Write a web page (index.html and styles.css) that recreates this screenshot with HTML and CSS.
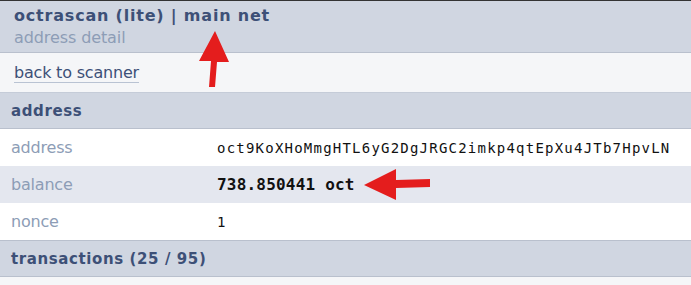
FILE: index.html
```html
<!DOCTYPE html>
<html>
<head>
<meta charset="utf-8">
<link rel="stylesheet" href="styles.css">
</head>
<body>
<div class="page">
  <header class="top">
    <div class="title">octrascan (lite) | main net</div>
    <div class="subtitle">address detail</div>
  </header>
  <nav class="nav"><a class="back" href="#">back to scanner</a></nav>
  <section>
    <h2 class="sec">address</h2>
    <div class="row">
      <div class="lbl">address</div>
      <div class="val mono">oct9KoXHoMmgHTL6yG2DgJRGC2imkp4qtEpXu4JTb7HpvLN</div>
    </div>
    <div class="row alt">
      <div class="lbl">balance</div>
      <div class="val mono bold">738.850441 oct</div>
    </div>
    <div class="row">
      <div class="lbl">nonce</div>
      <div class="val mono">1</div>
    </div>
  </section>
  <section>
    <h2 class="sec">transactions (25 / 95)</h2>
  </section>
  <svg class="arrows" width="691" height="285" viewBox="0 0 691 285">
    <polygon fill="#e41d1d" points="215,31 199,61 211,61 209,87 215,87 217,62 229,62"/>
    <polygon fill="#e41d1d" points="364,185 396,169 396,180 430,179 430,187 396,188 396,200"/>
  </svg>
</div>
</body>
</html>
```

FILE: styles.css
```css
*, *::before, *::after {
  box-sizing: border-box;
}
html, body {
  margin: 0;
  padding: 0;
  background: #f5f6f8;
}
body {
  font-family: "DejaVu Sans", Verdana, sans-serif;
  font-size: 16px;
  letter-spacing: -0.1px;
  color: #111;
}
.page {
  position: relative;
  border-top: 1px solid #333;
}
.top {
  background: #d0d6e1;
  padding: 5px 14px 0;
  height: 52px;
  border-bottom: 1px solid #b9c0cd;
}
.title {
  font-weight: bold;
  font-size: 16px;
  line-height: 20px;
  letter-spacing: 0.8px;
  color: #3d5077;
}
.subtitle {
  font-size: 16px;
  line-height: 20px;
  margin-top: 2px;
  color: #8d9db6;
}
.nav {
  background: #f5f6f8;
  padding: 10px 14px 0;
  height: 40px;
  border-bottom: 1px solid #c5ccd8;
}
.back {
  color: #3d5077;
  text-decoration: none;
  border-bottom: 1px solid #b9c3d3;
  font-size: 16px;
  line-height: 19px;
  letter-spacing: -0.2px;
  display: inline-block;
}
.sec {
  margin: 0;
  background: #d0d6e1;
  font-size: 15px;
  font-weight: bold;
  letter-spacing: 0.6px;
  color: #3d5077;
  padding: 9px 11px 0;
  height: 36px;
  line-height: 18px;
  border-bottom: 1px solid #b9c0cd;
}
.row {
  display: grid;
  grid-template-columns: 207px 1fr;
  background: #fff;
  height: 37px;
  align-items: center;
}
.row.alt {
  background: #e4e7ef;
}
.row:last-child {
  height: 38px;
  border-bottom: 1px solid #b9c0cd;
}
.lbl {
  padding-left: 11px;
  font-size: 16px;
  letter-spacing: -0.2px;
  color: #8d9db6;
}
.val {
  padding-left: 10px;
  color: #111;
}
.mono {
  font-family: "DejaVu Sans Mono", monospace;
  font-size: 14px;
  letter-spacing: 1.22px;
}
.bold {
  font-weight: bold;
  font-size: 16px;
  letter-spacing: 0.2px;
}
.arrows {
  position: absolute;
  left: 0;
  top: -1px;
  pointer-events: none;
}
```
